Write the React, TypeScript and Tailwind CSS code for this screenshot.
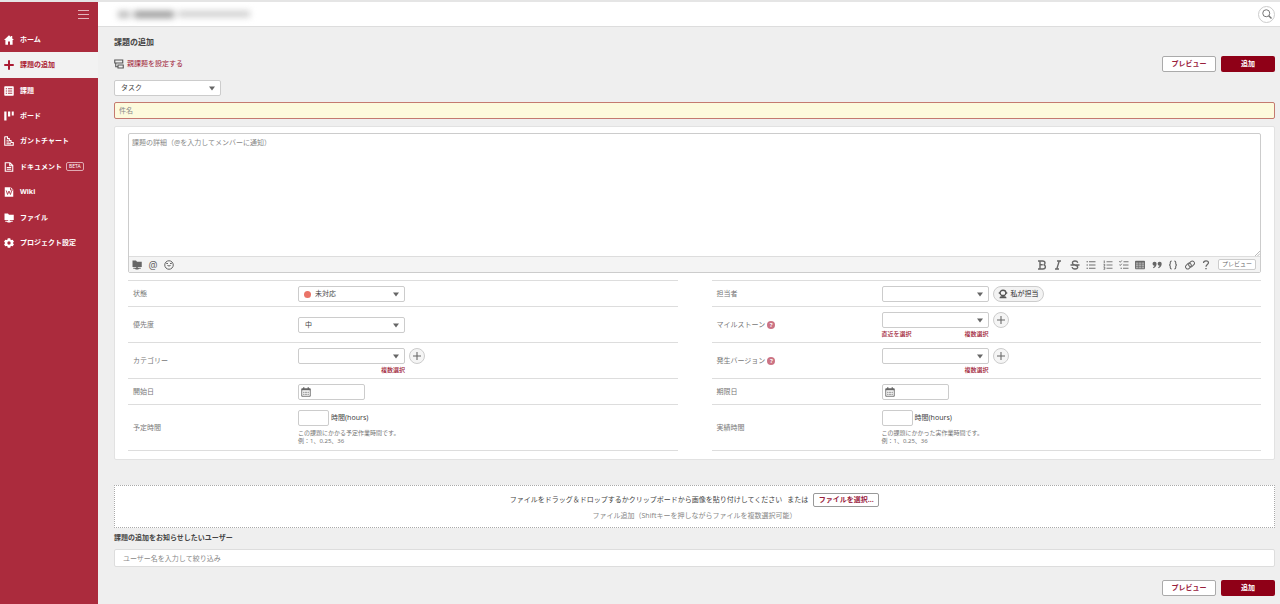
import React from 'react';

type IconProps = { className?: string };

const HomeIcon: React.FC<IconProps> = ({ className }) => (
  <svg viewBox="0 0 20 20" className={className} fill="currentColor">
    <path d="M10 0.500 0 10.200h2.800V19.500h5.200v-6.500h4v6.500h5.200v-9.300H20L16.500 6.800V2h-2.800v2z" />
  </svg>
);

const PlusIcon: React.FC<IconProps> = ({ className }) => (
  <svg viewBox="0 0 20 20" className={className} stroke="currentColor" strokeWidth="4">
    <path d="M10 0.500v19M0.500 10h19" />
  </svg>
);

const ThinPlusIcon: React.FC<IconProps> = ({ className }) => (
  <svg viewBox="0 0 20 20" className={className} stroke="currentColor" strokeWidth="2.600">
    <path d="M10 0v20M0 10h20" />
  </svg>
);

const IssuesIcon: React.FC<IconProps> = ({ className }) => (
  <svg viewBox="0 0 20 20" className={className}>
    <rect x="0.5" y="0.5" width="19" height="19" rx="1.5" fill="currentColor" />
    <path d="M3.500 5.500h2.500M3.500 10h2.500M3.500 14.500h2.500M7.800 5.500h8.700M7.800 10h8.700M7.800 14.500h8.700" stroke="#ab2b3d" strokeWidth="1.900" />
  </svg>
);

const BoardIcon: React.FC<IconProps> = ({ className }) => (
  <svg viewBox="0 0 20 20" className={className} fill="currentColor">
    <path d="M0.500 1h4.500v18H0.500zM8 1h4.500v10H8zM15.500 1h4v8h-4z" />
  </svg>
);

const GanttIcon: React.FC<IconProps> = ({ className }) => (
  <svg viewBox="0 0 20 20" className={className} fill="none" stroke="currentColor" strokeWidth="2.200">
    <path d="M1.500 1v17.500h17v-5.500H14V9h-3.500V5H7V1.500H1.500M5 8.500h3.500M5 12h6M5 15.500h9" />
  </svg>
);

const DocumentIcon: React.FC<IconProps> = ({ className }) => (
  <svg viewBox="0 0 20 20" className={className} fill="none" stroke="currentColor" strokeWidth="2.200">
    <path d="M2.500 1.500h9.500l5.500 5.500v11.500h-15zM11.500 2v5.500H17M5.500 11h9M5.500 14.500h9" />
  </svg>
);

const WikiIcon: React.FC<IconProps> = ({ className }) => (
  <svg viewBox="0 0 20 20" className={className}>
    <path d="M1.500 0.500h12l5 5v14h-17z" fill="currentColor" />
    <path d="M4.500 7l2.600 8L10 8l2.900 7 2.600-8M13 1v5h5" fill="none" stroke="#ab2b3d" strokeWidth="1.700" />
  </svg>
);

const FolderIcon: React.FC<IconProps> = ({ className }) => (
  <svg viewBox="0 0 20 20" className={className} fill="currentColor">
    <path d="M1 1h7l2 2.500h9.500V14H11.500v1.500h6v2H14l-1.500 1.500h-5L6 17.500H2.500v-2h6V14H1z" />
  </svg>
);

const GearIcon: React.FC<IconProps> = ({ className }) => (
  <svg viewBox="0 0 20 20" className={className} fill="currentColor" fillRule="evenodd">
    <path d="M7.500 0.500h5l0.700 2.800 1.500 0.900 2.800-0.800 2.400 4.100-2 2v1l2 2-2.400 4.100-2.800-0.800-1.500 0.900-0.700 2.800h-5l-0.700-2.800-1.500-0.900-2.800 0.800-2.400-4.100 2-2v-1l-2-2 2.400-4.100 2.800 0.800 1.500-0.900zM10 6.600a3.400 3.400 0 1 0 0 6.800 3.400 3.400 0 0 0 0-6.800z" />
  </svg>
);

const ParentIcon: React.FC<IconProps> = ({ className }) => (
  <svg viewBox="0 0 20 20" className={className} fill="none" stroke="currentColor" strokeWidth="2.200">
    <path d="M1.500 2h16v6h-16zM8 12h10.500v6H8zM3.500 8v7.500H8" />
  </svg>
);

const CalendarIcon: React.FC<IconProps> = ({ className }) => (
  <svg viewBox="0 0 20 20" className={className} fill="none" stroke="currentColor">
    <path d="M1.500 3.500h17v15h-17z" strokeWidth="1.800" />
    <path d="M1.500 5h17M5.500 0.500v4M14.500 0.500v4" strokeWidth="2.600" />
    <path d="M4.500 10.500h11M4.500 14.500h11" strokeWidth="2" strokeDasharray="2 1" />
  </svg>
);

const PersonIcon: React.FC<IconProps> = ({ className }) => (
  <svg viewBox="0 0 20 20" className={className} fill="none" stroke="currentColor">
    <path d="M10 2.500c3.500 0 5.700 2.300 5.700 5.200 0 2-0.900 3.900-2.400 4.900H6.700C5.200 11.600 4.300 9.700 4.300 7.700 4.300 4.800 6.500 2.500 10 2.500z" strokeWidth="2.600" />
    <path d="M1.500 8h2.500M16 8h2.500" strokeWidth="3" />
    <path d="M3 18.500c0-3 2-4.500 7-4.500s7 1.500 7 4.500z" fill="currentColor" stroke="none" />
  </svg>
);

const SmileIcon: React.FC<IconProps> = ({ className }) => (
  <svg viewBox="0 0 20 20" className={className} fill="none" stroke="currentColor" strokeWidth="2">
    <circle cx="10" cy="10" r="8.500" />
    <path d="M6.500 10c1 2.500 6 2.500 7 0M4.500 7h3.500M12 7h3.500" />
  </svg>
);

const SearchIcon: React.FC<IconProps> = ({ className }) => (
  <svg viewBox="0 0 20 20" className={className} fill="none" stroke="currentColor" strokeWidth="2">
    <circle cx="8.500" cy="8.500" r="7" />
    <path d="M13.500 13.500l5.500 5.500" strokeWidth="2.800" />
  </svg>
);

const NAV = [
  { label: 'ホーム', icon: HomeIcon },
  { label: '課題の追加', icon: PlusIcon, active: true },
  { label: '課題', icon: IssuesIcon },
  { label: 'ボード', icon: BoardIcon },
  { label: 'ガントチャート', icon: GanttIcon },
  { label: 'ドキュメント', icon: DocumentIcon, badge: 'BETA' },
  { label: 'Wiki', icon: WikiIcon },
  { label: 'ファイル', icon: FolderIcon },
  { label: 'プロジェクト設定', icon: GearIcon },
];

const FORMATS: { name: string; icon: React.ReactNode }[] = [
  { name: '太字', icon: <path d="M2 2h9c3 0 5 1.400 5 3.900 0 1.900-1.100 3-2.700 3.500 2.200 0.400 3.500 1.900 3.500 4.100 0 2.900-2.200 4.500-5.300 4.500H2M6 2v16M6 9.500h5.500" strokeWidth="2.800" /> },
  { name: '斜体', icon: <path d="M8 2h8M4 18h8M12.500 2l-5 16" strokeWidth="2.600" /> },
  { name: '打ち消し線', icon: <path d="M15.500 5.500C15 3 13 2 10 2 6.500 2 4.800 3.600 4.800 5.800c0 2.700 2.500 3.400 5.200 4.200 3 0.800 5.500 1.600 5.500 4.200 0 2.400-2 3.800-5.500 3.800-3.200 0-5.300-1.200-5.800-4M1 10h18" strokeWidth="2.600" /> },
  { name: '箇条書き', icon: <path d="M1 3.500h3M1 10h3M1 16.500h3M6 3.500h13M6 10h13M6 16.500h13" strokeWidth="1.900" /> },
  { name: '番号リスト', icon: <path d="M2.500 1v5M1 8.500h2.500v3H1.500M1 14h2.500v4.500H1M7 3.500h12M7 10h12M7 16.500h12" strokeWidth="1.700" /> },
  { name: 'チェックリスト', icon: <path d="M0.500 2.500l2 2 3-3.500M0.500 9l2 2 3-3.500M9 3.500h10M8 10h11M8 16.500h11M3 16.500h3" strokeWidth="1.800" /> },
  { name: '表', icon: <><path d="M1 2.500h18v15H1z" fill="#aaa" strokeWidth="1.800" /><path d="M1 3.500h18" strokeWidth="3" /><path d="M7 3v14M13 3v14M1 8.500h18M1 13h18" strokeWidth="1" /></> },
  { name: '引用', icon: <path d="M5 3.500a4 4 0 0 1 4.200 4C9.200 12 6.500 15 3 16.500L2 14.500c1.800-0.700 2.800-1.700 3-3A4 4 0 0 1 5 3.500zM15.200 3.500a4 4 0 0 1 4.200 4C19.400 12 16.700 15 13.200 16.500l-1-2c1.800-0.700 2.800-1.700 3-3A4 4 0 0 1 15.200 3.500z" fill="currentColor" stroke="none" /> },
  { name: 'コード', icon: <path d="M7.500 2C5 2 4.500 3 4.500 5v2.500C4.500 9 3.500 10 2 10c1.500 0 2.500 1 2.500 2.500V15c0 2 0.500 3 3 3M12.500 2c2.500 0 3 1 3 3v2.500c0 1.500 1 2.500 2.500 2.500-1.500 0-2.500 1-2.500 2.500V15c0 2-0.500 3-3 3" strokeWidth="2.200" /> },
  { name: 'リンク', icon: <g transform="rotate(-45 10 10)" strokeWidth="2"><rect x="0" y="5" width="12.500" height="8.500" rx="4.200" /><rect x="7.500" y="6.500" width="12.500" height="8.500" rx="4.200" /></g> },
  { name: 'ヘルプ', icon: <><path d="M5 6c0-2.600 1.800-4.200 5-4.200S15 3.400 15 5.700c0 3.300-5 3.700-5 7.800" strokeWidth="2.400" /><path d="M10 15.800v2.700" strokeWidth="2.800" /></> },
];

type SelectProps = { id: string; options: string[]; dot?: boolean; label?: string };

const Select: React.FC<SelectProps> = ({ id, options, dot, label }) => (
  <div className="relative w-[107px]">
    <select
      id={id}
      aria-label={label}
      className={`block h-4 w-full appearance-none rounded-xs border border-[#ccc] bg-white leading-[14px] text-[#444] outline-none ${dot ? 'pl-4' : 'pl-[6px]'}`}
    >
      {options.map((o) => <option key={o}>{o}</option>)}
    </select>
    {dot && <span className="pointer-events-none absolute left-[6px] top-[5px] h-[7px] w-[7px] rounded-full bg-[#ea7468]" />}
    <svg viewBox="0 0 12 8" className="pointer-events-none absolute right-[6px] top-[6px] h-[5px] w-[6px] fill-[#666]">
      <path d="M0 0h12L6 8z" />
    </svg>
  </div>
);

type RowProps = { id: string; label: string; size: string; help?: boolean; children: React.ReactNode };

const Row: React.FC<RowProps> = ({ id, label, size, help, children }) => (
  <div className={`flex items-center border-b border-[#ddd] ${size}`}>
    <div className="flex w-[170px] shrink-0 items-center gap-[2px] pl-[5px] text-[#777]">
      <label htmlFor={id}>{label}</label>
      {help && (
        <span className="flex h-2 w-2 items-center justify-center rounded-full bg-[#cb7384] text-[6px] leading-none font-bold text-white">?</span>
      )}
    </div>
    {children}
  </div>
);

const TextLink: React.FC<{ children: React.ReactNode }> = ({ children }) => (
  <a href="#" className="text-[6px] leading-2 font-medium text-[#a01c38]">{children}</a>
);

const AddButton: React.FC<{ label: string }> = ({ label }) => (
  <button type="button" aria-label={label} className="flex h-4 w-4 items-center justify-center rounded-full border border-[#ccc] bg-[#f5f5f5] text-[#666]">
    <ThinPlusIcon className="h-2 w-2" />
  </button>
);

const MultiSelect: React.FC<{ id: string; name: string; recent?: boolean }> = ({ id, name, recent }) => (
  <div className="flex items-start gap-1">
    <div className="flex flex-col gap-[2px]">
      <Select id={id} options={['']} />
      <div className="flex h-2 justify-between">
        <span className="flex">{recent && <TextLink>直近を選択</TextLink>}</span>
        <TextLink>複数選択</TextLink>
      </div>
    </div>
    <AddButton label={`${name}を追加`} />
  </div>
);

const DateField: React.FC<{ id: string }> = ({ id }) => (
  <div className="relative">
    <input id={id} type="text" className="block h-4 w-[67px] rounded-xs border border-[#ccc] bg-white pl-4 outline-none" />
    <CalendarIcon className="pointer-events-none absolute left-[3px] top-[3px] h-[10px] w-[10px] text-[#666]" />
  </div>
);

const HoursField: React.FC<{ id: string; note: string }> = ({ id, note }) => (
  <div>
    <div className="flex items-center gap-[2px] text-[#444]">
      <input id={id} type="text" className="block h-4 w-[31px] rounded-xs border border-[#ccc] bg-white px-1 outline-none" />
      時間(hours)
    </div>
    <p className="mt-[3px] text-[6px] leading-2 text-[#777]">
      {note}
      <br />
      例：1、0.25、36
    </p>
  </div>
);

const Actions: React.FC = () => (
  <div className="flex gap-[5px]">
    <button type="button" className="h-4 w-[54px] rounded-xs border border-[#aaa] bg-white font-bold text-[#99203c]">プレビュー</button>
    <button type="submit" className="h-4 w-[54px] rounded-xs bg-[#8f0017] font-bold text-white">追加</button>
  </div>
);

const Sidebar: React.FC = () => (
  <aside className="w-[98px] shrink-0 bg-[#ab2b3d] font-bold text-white">
    <div className="flex h-[25px] items-center justify-end pr-[9px]">
      <button type="button" aria-label="メニュー" className="text-[#e3b5bc]">
        <svg viewBox="0 0 11 10" className="h-[10px] w-[11px]" stroke="currentColor">
          <path d="M0 0.500h11M0 4.500h11M0 8.500h11" />
        </svg>
      </button>
    </div>
    <nav className="flex h-[229px] flex-col">
      {NAV.map(({ label, icon: Icon, active, badge }) => (
        <a
          key={label}
          href="#"
          className={`flex flex-1 items-center gap-[6px] pl-1 ${active ? 'bg-[#f2f2f2] text-[#ab1b33]' : ''}`}
        >
          <Icon className="h-[10px] w-[10px] shrink-0" />
          <span>{label}</span>
          {badge && (
            <span className="-ml-[2px] rounded-xs border border-[#e0aab2] px-[2px] text-[5px] leading-[7px] font-normal">{badge}</span>
          )}
        </a>
      ))}
    </nav>
  </aside>
);

const Header: React.FC = () => (
  <header className="flex h-[25px] items-center justify-between border-b border-[#ddd] bg-white pr-[5px] pl-5">
    <div className="flex items-center gap-1 blur-[3px]">
      <span className="h-[7px] w-3 bg-[#bbb]" />
      <span className="h-[7px] w-10 bg-[#999]" />
      <span className="h-[6px] w-[72px] bg-[#ccc]" />
    </div>
    <button type="button" aria-label="検索" className="flex h-[17px] w-[17px] items-center justify-center rounded-full border border-[#ccc] bg-white text-[#777]">
      <SearchIcon className="h-[10px] w-[10px]" />
    </button>
  </header>
);

const Editor: React.FC = () => (
  <div className="rounded-xs border border-[#ccc] bg-white">
    <textarea
      aria-label="課題の詳細"
      placeholder="課題の詳細（@を入力してメンバーに通知）"
      className="block h-[122px] w-full resize-none px-[3px] py-1 leading-[10px] outline-none placeholder:text-[#888]"
    />
    <div className="relative flex h-4 items-center justify-between border-t border-[#ddd] bg-[#f4f4f4] pr-1 pl-[3px] text-[#666]">
      <svg viewBox="0 0 6 6" className="absolute right-0 -top-[6px] h-[5px] w-[5px]" stroke="#888" strokeWidth="0.700">
        <path d="M0 6l6-6M3 6l3-3" />
      </svg>
      <div className="flex items-center gap-[6px]">
        <button type="button" aria-label="ファイル"><FolderIcon className="h-[10px] w-[10px]" /></button>
        <button type="button" className="w-[10px] text-[10px] leading-3">@</button>
        <button type="button" aria-label="絵文字"><SmileIcon className="h-[10px] w-[10px]" /></button>
      </div>
      <div className="flex items-center gap-[7px]">
        <div className="flex w-[174px] justify-between">
          {FORMATS.map((f) => (
            <button key={f.name} type="button" aria-label={f.name}>
              <svg viewBox="0 0 20 20" className="h-[10px] w-[10px]" fill="none" stroke="currentColor">{f.icon}</svg>
            </button>
          ))}
        </div>
        <button type="button" className="h-[11px] w-[38px] rounded-xs border border-[#ccc] bg-white text-[6px] leading-[9px]">プレビュー</button>
      </div>
    </div>
  </div>
);

const Fields: React.FC = () => (
  <div className="mt-[7px] grid grid-cols-2 gap-x-[34px]">
    <div className="border-t border-[#ddd]">
      <Row id="status" label="状態" size="h-[26px]"><Select id="status" options={['未対応']} dot /></Row>
      <Row id="priority" label="優先度" size="h-9"><Select id="priority" options={['中']} /></Row>
      <Row id="category" label="カテゴリー" size="h-9"><MultiSelect id="category" name="カテゴリー" /></Row>
      <Row id="start" label="開始日" size="h-[26px]"><DateField id="start" /></Row>
      <Row id="estimated" label="予定時間" size="h-[46px]">
        <HoursField id="estimated" note="この課題にかかる予定作業時間です。" />
      </Row>
    </div>
    <div className="border-t border-[#ddd]">
      <Row id="assignee" label="担当者" size="h-[26px]">
        <div className="flex gap-1">
          <Select id="assignee" options={['']} />
          <button type="button" className="flex h-4 items-center gap-[3px] rounded-full border border-[#ccc] bg-[#f3f3f3] px-1 font-medium text-[#555]">
            <PersonIcon className="h-[10px] w-[10px]" />
            私が担当
          </button>
        </div>
      </Row>
      <Row id="milestone" label="マイルストーン" size="h-9" help><MultiSelect id="milestone" name="マイルストーン" recent /></Row>
      <Row id="version" label="発生バージョン" size="h-9" help><MultiSelect id="version" name="発生バージョン" /></Row>
      <Row id="due" label="期限日" size="h-[26px]"><DateField id="due" /></Row>
      <Row id="actual" label="実績時間" size="h-[46px]">
        <HoursField id="actual" note="この課題にかかった実作業時間です。" />
      </Row>
    </div>
  </div>
);

const App: React.FC = () => (
  <div className="flex min-h-screen flex-col bg-[#efefef] text-[7px] leading-[10px] text-[#444] [font-family:'Noto_Sans','Noto_Sans_CJK_JP',sans-serif]">
    <div className="h-[2px] bg-[#e5e5e5]" />
    <div className="flex flex-1">
      <Sidebar />
      <main className="min-w-0 flex-1">
        <Header />
        <form className="pt-[7px] pr-[5px] pb-2 pl-4">
          <h1 className="text-[8px] leading-4 font-bold">課題の追加</h1>
          <div className="mt-[6px] flex items-center justify-between">
            <a href="#" className="flex items-center gap-[3px] text-[#a01c38]">
              <ParentIcon className="h-[10px] w-[10px] text-[#555]" />
              親課題を設定する
            </a>
            <Actions />
          </div>
          <div className="mt-2">
            <Select id="type" label="種別" options={['タスク']} />
          </div>
          <input
            type="text"
            aria-label="件名"
            placeholder="件名"
            autoFocus
            className="mt-[6px] block h-[17px] w-full rounded-xs border border-[#c47a70] bg-[#fdfadc] px-1 outline-none placeholder:text-[#888]"
          />

          <section className="mt-[7px] rounded-xs border border-[#e2e2e2] bg-white px-[13px] pt-[6px] pb-2">
            <Editor />
            <Fields />
          </section>

          <section className="mt-[25px] flex h-[43px] flex-col items-center justify-center gap-1 border border-dotted border-[#aaa] bg-white">
            <div className="flex items-center gap-[5px]">
              <span>ファイルをドラッグ＆ドロップするかクリップボードから画像を貼り付けしてください</span>
              <span>または</span>
              <button type="button" className="h-[14px] w-[66px] rounded-xs border border-[#999] bg-white font-bold text-[#99203c]">ファイルを選択...</button>
            </div>
            <p className="text-[#888]">ファイル追加（Shiftキーを押しながらファイルを複数選択可能）</p>
          </section>

          <label htmlFor="notify" className="mt-1 block leading-3 font-bold">課題の追加をお知らせしたいユーザー</label>
          <input
            id="notify"
            type="text"
            placeholder="ユーザー名を入力して絞り込み"
            className="mt-[5px] block h-[18px] w-full rounded-xs border border-[#ddd] bg-white px-2 outline-none placeholder:text-[#888]"
          />
          <div className="mt-[13px] flex justify-end">
            <Actions />
          </div>
        </form>
      </main>
    </div>
  </div>
);

export default App;
